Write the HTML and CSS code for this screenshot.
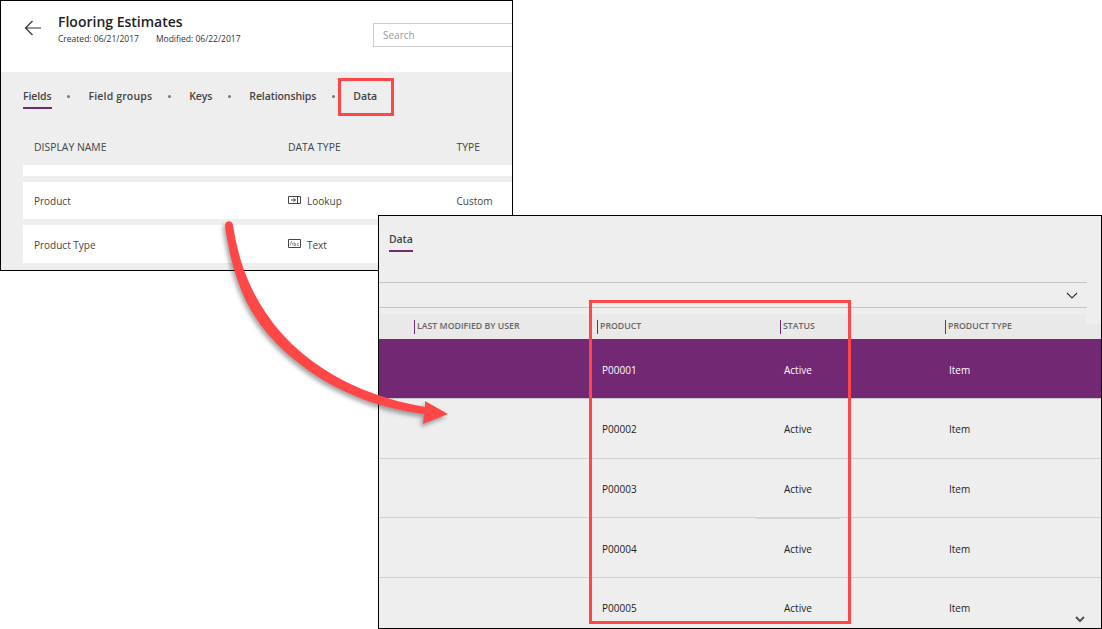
FILE: index.html
```html
<!DOCTYPE html>
<html lang="en">
<head>
    <meta charset="UTF-8">
    <title>Flooring Estimates</title>
    <link rel="stylesheet" href="styles.css">
</head>
<body>
    <div class="canvas">
        <section class="window entity">
            <header class="entity-head">
                <svg class="back" width="18" height="16" viewBox="0 0 18 16"><path d="M17 8H1.500M8.500 1L1.500 8l7 7" fill="none" stroke="#333" stroke-width="1.2"/></svg>
                <div class="entity-title">
                    <h1>Flooring Estimates</h1>
                    <p><span>Created: 06/21/2017</span><span>Modified: 06/22/2017</span></p>
                </div>
                <div class="search">Search</div>
            </header>
            <div class="entity-body">
                <nav class="tabs">
                    <span class="tab active">Fields</span><i class="dot"></i>
                    <span class="tab tab-wide">Field groups</span><i class="dot"></i>
                    <span class="tab">Keys</span><i class="dot"></i>
                    <span class="tab">Relationships</span><i class="dot"></i>
                    <span class="tab">Data</span>
                </nav>
                <div class="field-head">
                    <span>DISPLAY NAME</span><span>DATA TYPE</span><span>TYPE</span>
                </div>
                <div class="field-row blank"></div>
                <div class="field-row">
                    <span>Product</span>
                    <span class="dtype">
                        <svg width="13" height="9" viewBox="0 0 13 9"><path d="M.5.500h12v7H.5zM9.500.500v7M3 4h4.500M5.500 2.500L7.500 4l-2 1.500" fill="none" stroke="#444"/></svg>
                        Lookup
                    </span>
                    <span>Custom</span>
                </div>
                <div class="field-row">
                    <span>Product Type</span>
                    <span class="dtype">
                        <svg class="icon-up" width="13" height="9" viewBox="0 0 13 9"><path d="M.5.500h12v8H.5z" fill="none" stroke="#444"/><path d="M2 6.500l1.500-4 1.500 4M6 2.500v4h1.500v-2H6M11 4.500H9.500v2H11" fill="none" stroke="#777" stroke-width=".7"/></svg>
                        Text
                    </span>
                    <span>Custom</span>
                </div>
            </div>
        </section>

        <section class="window data">
            <div class="data-tabs"><span class="tab active">Data</span></div>
            <div class="filter">
                <svg width="12" height="7" viewBox="0 0 12 7"><path d="M1 1l5 5 5-5" fill="none" stroke="#333" stroke-width="1.1"/></svg>
            </div>
            <div class="grid-head">
                <span>LAST MODIFIED BY USER</span><span>PRODUCT</span><span>STATUS</span><span>PRODUCT TYPE</span>
            </div>
            <div class="grid-row selected"><span></span><span>P00001</span><span>Active</span><span>Item</span></div>
            <div class="grid-row"><span></span><span>P00002</span><span>Active</span><span>Item</span></div>
            <div class="grid-row"><span></span><span>P00003</span><span>Active</span><span>Item</span></div>
            <div class="grid-row"><span></span><span>P00004</span><span>Active</span><span>Item</span></div>
            <div class="grid-row"><span></span><span>P00005</span><span>Active</span><span>Item</span></div>
            <i class="seam"></i>
            <svg class="more" width="10" height="7" viewBox="0 0 10 7"><path d="M1 1l4 4 4-4" fill="none" stroke="#555" stroke-width="2"/></svg>
        </section>

        <div class="callout callout-tab"></div>
        <div class="callout callout-cols"></div>

        <svg class="arrow" width="1102" height="629" viewBox="0 0 1102 629">
            <path d="M225 226C225 220 232 220 233 225C238 258 248 290 273 323C302 360 350 394 425 407L425 401L448 414L423 424L424 414C342 404 292 362 267 333C240 300 231 265 225 226Z" fill="#ff4747"/>
        </svg>
    </div>
</body>
</html>
```

FILE: styles.css
```css
* {
    box-sizing: border-box;
}
body {
    margin: 0;
    background: #fff;
    font-family: "Open Sans", "Noto Sans", sans-serif;
    color: #333;
}
.canvas {
    position: relative;
    width: 1102px;
    height: 629px;
    overflow: hidden;
}
.window {
    position: absolute;
    border: 1px solid #000;
    overflow: hidden;
}

/* entity window */
.entity {
    left: 0;
    top: 0;
    width: 513px;
    height: 271px;
    background: #fff;
}
.entity-head {
    display: flex;
    align-items: flex-start;
    height: 71px;
    padding: 13px 0 0 23px;
}
.back {
    flex: none;
    margin: 6px 16px 0 0;
}
.entity-title {
    flex: none;
    width: 315px;
}
.entity-title h1 {
    margin: 0;
    font-size: 14px;
    font-weight: 600;
    line-height: 16px;
    color: #222;
}
.entity-title p {
    display: flex;
    gap: 17px;
    margin: 2px 0 0;
    font-size: 8.500px;
    line-height: 14px;
    color: #333;
}
.search {
    flex: none;
    width: 160px;
    height: 24px;
    margin-top: 9px;
    padding: 0 9px;
    border: 1px solid #ccc;
    font-size: 10px;
    line-height: 22px;
    color: #999;
}
.entity-body {
    height: 198px;
    padding: 16px 0 0 22px;
    background: #eee;
}
.tabs {
    display: flex;
    align-items: flex-start;
    height: 21px;
}
.tab {
    display: block;
    height: 21px;
    font-size: 10.500px;
    font-weight: 600;
    line-height: 16px;
    color: #444;
    letter-spacing: -.1px;
    white-space: nowrap;
}
.tab-wide {
    letter-spacing: .15px;
}
.tab.active {
    border-bottom: 2px solid #732873;
}
.dot {
    flex: none;
    width: 3px;
    height: 3px;
    margin: 7px 18.500px 0 15.500px;
    border-radius: 50%;
    background: #777;
}
.field-head,
.field-row {
    display: grid;
    grid-template-columns: 254px 168.500px 1fr;
    align-items: center;
    padding-left: 11px;
    color: #444;
    white-space: nowrap;
}
.field-head {
    height: 56px;
    padding-top: 20px;
    font-size: 10.400px;
}
.field-row {
    height: 37px;
    margin-bottom: 6px;
    background: #fff;
    font-size: 10px;
}
.field-row:last-child {
    height: 38px;
    padding-top: 1px;
}
.field-row.blank {
    height: 11px;
}
.dtype {
    display: flex;
    align-items: center;
    gap: 6px;
}
.icon-up {
    margin-top: -3px;
}

/* data window */
.data {
    left: 378px;
    top: 215px;
    width: 724px;
    height: 414px;
    background: #eee;
}
.data-tabs {
    height: 66px;
    padding: 15px 0 0 10px;
}
.data-tabs .tab {
    width: 24px;
    height: 21px;
}
.filter {
    display: flex;
    align-items: center;
    justify-content: flex-end;
    width: 708px;
    height: 26px;
    padding-right: 9px;
    border-top: 1px solid #c4c4c4;
    border-bottom: 1px solid #c4c4c4;
}
.grid-head,
.grid-row {
    display: grid;
    grid-template-columns: 218px 183px 165px 1fr;
    white-space: nowrap;
}
.grid-head {
    position: relative;
    align-items: center;
    height: 25px;
    margin-top: 6px;
    background: #e9e9e9;
    font-size: 8.750px;
    font-weight: 600;
    color: #666;
}
.grid-head::after {
    content: "";
    position: absolute;
    right: 0;
    top: 0;
    width: 15px;
    height: 10px;
    background: #eee;
}
.grid-head span {
    height: 14px;
    padding-left: 2px;
    border-left: 1px solid #732873;
    line-height: 13px;
}
.grid-head span:first-child {
    margin-left: 35px;
}
.grid-row {
    align-items: center;
    height: 59.750px;
    padding-top: 2px;
    border-bottom: 1px solid #d2d2d2;
    font-size: 10px;
    color: #222;
}
.grid-row span {
    padding-left: 4px;
}
.grid-row span:nth-child(2) {
    padding-left: 5px;
}
.grid-row.selected {
    padding-top: 3px;
    border-bottom-color: #c8c8c8;
    background: #732873;
    color: #fff;
}
.seam {
    position: absolute;
    left: 377px;
    top: 302px;
    width: 84px;
    height: 1px;
    background: #d8d8d8;
}
.more {
    position: absolute;
    right: 16px;
    bottom: 5px;
}

/* annotations */
.callout {
    position: absolute;
    border: 3px solid #ff4747;
}
.callout-tab {
    left: 338px;
    top: 78px;
    width: 56px;
    height: 38px;
}
.callout-cols {
    left: 589px;
    top: 300px;
    width: 262px;
    height: 324px;
}
.arrow {
    position: absolute;
    left: 0;
    top: 0;
    filter: drop-shadow(-2px 3px 2px rgba(0, 0, 0, .35));
}
```
